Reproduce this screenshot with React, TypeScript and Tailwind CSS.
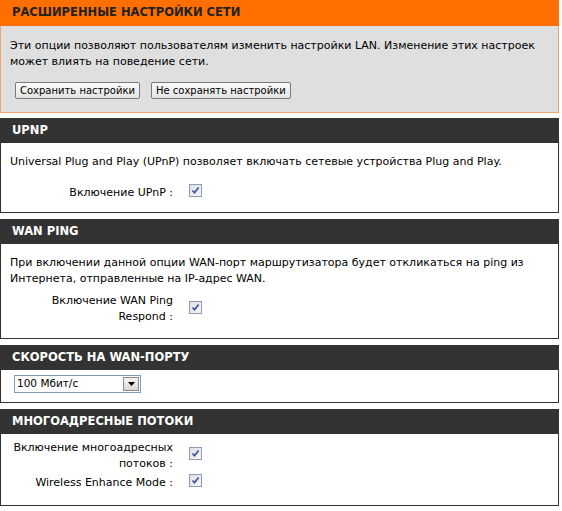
import React from 'react';

const Check = () => (
  <span className="inline-flex h-[13px] w-[13px] shrink-0 items-center justify-center border border-[#8e9bb0] bg-gradient-to-br from-[#dcdfe6] to-[#f7f7f7]">
    <svg viewBox="0 0 11 11" className="h-[11px] w-[11px]">
      <path d="M2.5 5.5 L4.5 7.8 L8.6 2.6" stroke="#3a4fa0" strokeWidth="1.6" fill="none" />
    </svg>
  </span>
);

const Header = ({ children }: { children: React.ReactNode }) => (
  <div className="flex h-[25px] items-center bg-[#333333] px-3 text-[11.5px] font-bold text-white">
    {children}
  </div>
);

const Row = ({ label }: { label: React.ReactNode }) => (
  <div className="flex items-center">
    <div className="w-[163px] text-right leading-[16px]">{label}</div>
    <div className="ml-[16px]">
      <Check />
    </div>
  </div>
);

const Btn = ({ children }: { children: React.ReactNode }) => (
  <button className="h-[17px] rounded-[2px] border border-[#7a7a7a] bg-gradient-to-b from-[#fbfbfb] to-[#e3e3e3] px-[4px] text-[10px] leading-[15px] text-black">
    {children}
  </button>
);

export default function App() {
  return (
    <div className="w-[559px] bg-white font-['DejaVu_Sans',sans-serif] text-[11px] text-black">
      {/* main block */}
      <div className="flex h-[26px] items-center bg-[#ff6f00] px-3 text-[11.5px] font-bold text-[#222]">
        РАСШИРЕННЫЕ НАСТРОЙКИ СЕТИ
      </div>
      <div className="border border-t-0 border-[#f2a46b] bg-[#dfdfdf] px-[9px] pb-[13px] pt-[12px] leading-[16px]">
        <p>
          Эти опции позволяют пользователям изменить настройки LAN. Изменение этих настроек может влиять на
          поведение сети.
        </p>
        <div className="mt-[12px] flex gap-[11px] pl-[5px]">
          <Btn>Сохранить настройки</Btn>
          <Btn>Не сохранять настройки</Btn>
        </div>
      </div>

      <div className="mt-[5px]">
        <Header>UPNP</Header>
        <div className="border border-t-0 border-[#333] px-[9px] pb-[11px] pt-[11px] leading-[16px]">
          <p>Universal Plug and Play (UPnP) позволяет включать сетевые устройства Plug and Play.</p>
          <div className="mt-[14px]">
            <Row label="Включение UPnP :" />
          </div>
        </div>
      </div>

      <div className="mt-[6px]">
        <Header>WAN PING</Header>
        <div className="border border-t-0 border-[#333] px-[9px] pb-[13px] pt-[11px] leading-[16px]">
          <p>
            При включении данной опции WAN-порт маршрутизатора будет откликаться на ping из Интернета,
            отправленные на IP-адрес WAN.
          </p>
          <div className="mt-[6px]">
            <Row
              label={
                <>
                  Включение WAN Ping
                  <br />
                  Respond :
                </>
              }
            />
          </div>
        </div>
      </div>

      <div className="mt-[6px]">
        <Header>СКОРОСТЬ НА WAN-ПОРТУ</Header>
        <div className="border border-t-0 border-[#333] px-[13px] pb-[9px] pt-[5px]">
          <div className="flex h-[18px] w-[127px] items-center border border-[#7f9db9] bg-white">
            <span className="flex-1 pl-[2px] text-[10.5px]">100 Мбит/с</span>
            <span className="mr-[1px] flex h-[14px] w-[16px] items-center justify-center border border-[#8a8a8a] bg-gradient-to-b from-[#f4f4f4] to-[#d8d8d8]">
              <svg viewBox="0 0 7 4" className="h-[4px] w-[7px]">
                <path d="M0 0 H7 L3.5 4 Z" fill="#000" />
              </svg>
            </span>
          </div>
        </div>
      </div>

      <div className="mt-[6px]">
        <Header>МНОГОАДРЕСНЫЕ ПОТОКИ</Header>
        <div className="flex flex-col gap-[2px] border border-t-0 border-[#333] px-[9px] pb-[13px] pt-[6px]">
          <Row
            label={
              <>
                Включение многоадресных
                <br />
                потоков :
              </>
            }
          />
          <Row label="Wireless Enhance Mode :" />
        </div>
      </div>
    </div>
  );
}
